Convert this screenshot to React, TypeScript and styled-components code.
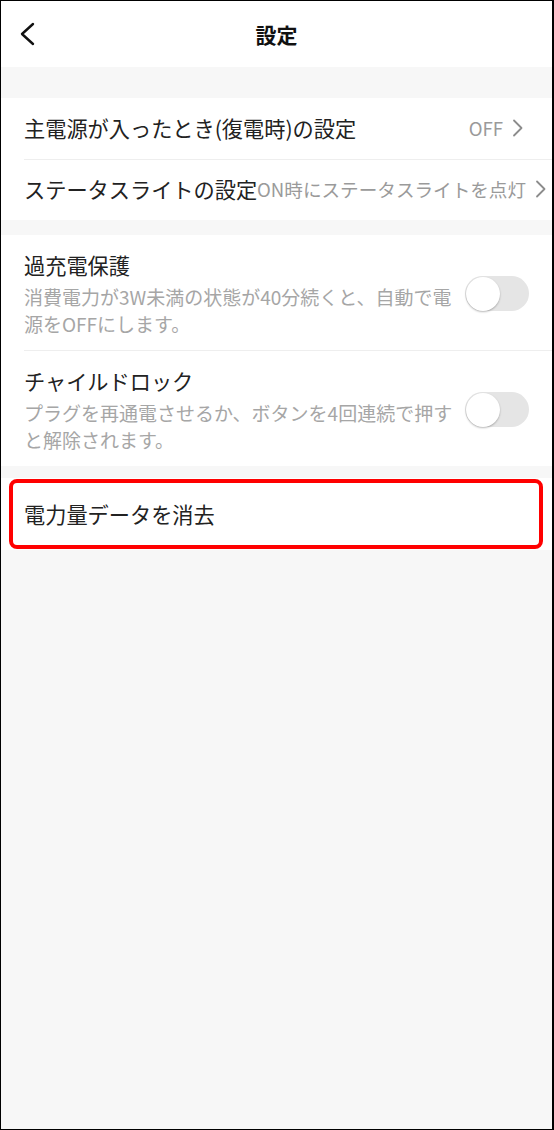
import React from "react";
import styled, { createGlobalStyle } from "styled-components";

const GlobalStyle = createGlobalStyle`
  html, body {
    margin: 0;
    padding: 0;
    background: #ffffff;
  }
  body {
    font-family: "Noto Sans CJK JP", "Noto Sans", sans-serif;
    -webkit-font-smoothing: antialiased;
  }
  * {
    box-sizing: border-box;
  }
`;

const Screen = styled.div`
  width: 554px;
  height: 1130px;
  border: 1px solid #000;
  border-right-width: 2px;
  background: #f7f7f7;
  display: flex;
  flex-direction: column;
  overflow: hidden;
`;

const Header = styled.header`
  height: 66px;
  background: #fff;
  display: grid;
  grid-template-columns: 60px 1fr 60px;
  align-items: center;
`;

const BackButton = styled.button`
  border: none;
  background: none;
  padding: 0 0 0 19px;
  height: 100%;
  display: flex;
  align-items: center;
  cursor: pointer;
`;

const Title = styled.h1`
  margin: 0;
  text-align: center;
  font-size: 21px;
  font-weight: 700;
  color: #111;
  line-height: 1;
`;

const Section = styled.section<{ $gap: number }>`
  margin-top: ${(p) => p.$gap}px;
  background: #fff;
`;

const Divider = styled.div`
  height: 1px;
  margin-left: 23px;
  background: #eeeeee;
`;

const LinkRow = styled.div<{ $height: number }>`
  height: ${(p) => p.$height}px;
  padding: 0 29px 2px 23px;
  display: flex;
  align-items: center;
  white-space: nowrap;
`;

const Label = styled.span`
  flex-shrink: 0;
  font-size: 21.2px;
  color: #222;
  line-height: 30px;
`;

const ValueGroup = styled.span`
  margin-left: auto;
  flex-shrink: 0;
  display: flex;
  align-items: center;
  gap: 9px;
`;

const Value = styled.span`
  font-size: 18.6px;
  color: #9a9a9a;
  line-height: 30px;
`;

const ToggleRow = styled.div`
  padding: 15px 23px 13px 23px;
  display: flex;
  align-items: center;
  justify-content: space-between;
`;

const TextBlock = styled.div`
  width: 434px;
  display: flex;
  flex-direction: column;
`;

const Desc = styled.p`
  margin: 3px 0 0;
  font-size: 19px;
  line-height: 27px;
  color: #a6a6a6;
`;

const Track = styled.div`
  position: relative;
  width: 64px;
  height: 35px;
  border-radius: 18px;
  background: #e5e5e5;
  flex-shrink: 0;
`;

const Knob = styled.div`
  position: absolute;
  top: 0.5px;
  left: 0.5px;
  width: 34px;
  height: 34px;
  border-radius: 50%;
  background: #fff;
  box-shadow: 0 1px 2px rgba(0, 0, 0, 0.28);
`;

const ActionRow = styled.div`
  position: relative;
  margin-top: 12px;
  height: 72px;
  background: #fff;
  padding: 0 23px;
  display: flex;
  align-items: center;
`;

const Highlight = styled.div`
  position: absolute;
  top: 1px;
  bottom: 1px;
  left: 8px;
  right: 9px;
  border: 4px solid #ff0000;
  border-radius: 8px;
  pointer-events: none;
`;

const BackIcon = () => (
  <svg width="16" height="24" viewBox="0 0 16 24">
    <polyline
      points="13,2 2,12 13,22"
      fill="none"
      stroke="#111"
      strokeWidth="2.4"
      strokeLinecap="round"
      strokeLinejoin="round"
    />
  </svg>
);

const Chevron = () => (
  <svg width="11" height="18" viewBox="0 0 11 18">
    <polyline
      points="2,1.5 9.5,9 2,16.5"
      fill="none"
      stroke="#8c8c8c"
      strokeWidth="1.8"
      strokeLinecap="round"
      strokeLinejoin="round"
    />
  </svg>
);

const Toggle = () => (
  <Track>
    <Knob />
  </Track>
);

export default function App() {
  return (
    <>
      <GlobalStyle />
      <Screen>
        <Header>
          <BackButton aria-label="戻る">
            <BackIcon />
          </BackButton>
          <Title>設定</Title>
          <span />
        </Header>

        <Section $gap={31}>
          <LinkRow $height={61}>
            <Label>主電源が入ったとき(復電時)の設定</Label>
            <ValueGroup>
              <Value>OFF</Value>
              <Chevron />
            </ValueGroup>
          </LinkRow>
          <Divider />
          <LinkRow $height={60}>
            <Label>ステータスライトの設定</Label>
            <ValueGroup>
              <Value>ON時にステータスライトを点灯</Value>
              <Chevron />
            </ValueGroup>
          </LinkRow>
        </Section>

        <Section $gap={15}>
          <ToggleRow>
            <TextBlock>
              <Label>過充電保護</Label>
              <Desc>消費電力が3W未満の状態が40分続くと、自動で電源をOFFにします。</Desc>
            </TextBlock>
            <Toggle />
          </ToggleRow>
          <Divider />
          <ToggleRow>
            <TextBlock>
              <Label>チャイルドロック</Label>
              <Desc>プラグを再通電させるか、ボタンを4回連続で押すと解除されます。</Desc>
            </TextBlock>
            <Toggle />
          </ToggleRow>
        </Section>

        <ActionRow>
          <Label>電力量データを消去</Label>
          <Highlight />
        </ActionRow>
      </Screen>
    </>
  );
}
